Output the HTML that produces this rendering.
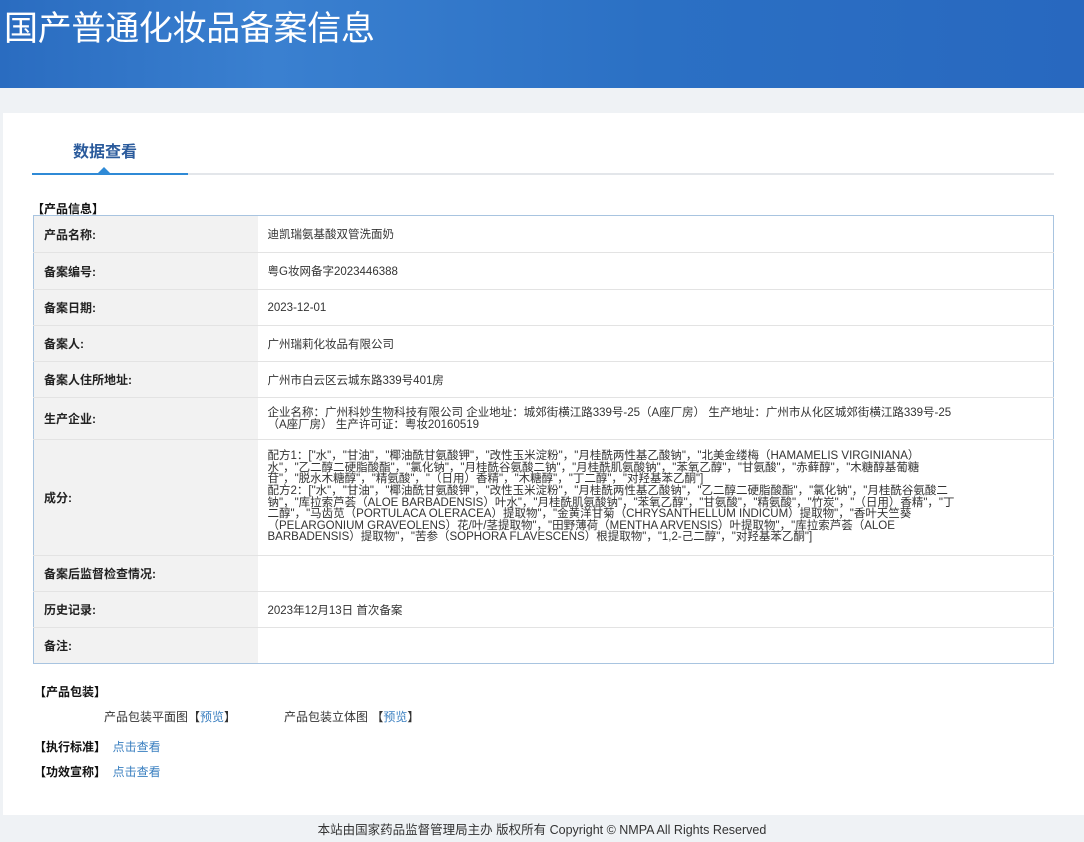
<!DOCTYPE html>
<html><head><meta charset="utf-8"><style>
*{margin:0;padding:0;box-sizing:border-box}
body{width:1084px;height:842px;background:#eff2f5;font-family:"Liberation Sans","Noto Sans CJK SC",sans-serif;font-size:12px;color:#333;position:relative;overflow:hidden}
.hd{position:absolute;left:0;top:0;width:1084px;height:88px;background:linear-gradient(90deg,#2a6cc0 0%,#3a80d0 25%,#2b70c4 60%,#2868bf 100%)}
.hd h1{position:absolute;left:4px;top:1px;font-size:34px;font-weight:normal;color:#fff;letter-spacing:-0.3px;font-family:"Liberation Sans","Noto Sans CJK SC",sans-serif}
.panel{position:absolute;left:3px;top:113px;width:1081px;height:702px;background:#fff}
.tab{position:absolute;left:73px;top:138px;font-size:16px;font-weight:bold;color:#2b5b9c}
.line{position:absolute;left:32px;top:173px;width:1022px;height:2px;background:#e3e6ea}
.line b{position:absolute;left:0;top:0;width:156px;height:2px;background:#2f8ad6}
.tri{position:absolute;left:98px;top:167px;width:0;height:0;border-left:6px solid transparent;border-right:6px solid transparent;border-bottom:6px solid #2f8ad6}
.sec{position:absolute;left:34px;font-weight:bold;color:#111;font-size:12px}
table{position:absolute;left:33px;top:215px;width:1021px;border-collapse:collapse;border:1px solid #a8c4e0}
td{border-top:1px solid #e3e3e3;vertical-align:middle}
td.l{width:224px;background:#f2f2f2;font-weight:bold;color:#222;padding-left:10px}
td.v{padding-left:10px;color:#333;font-size:11.5px}
.ing{line-height:11.6px;white-space:nowrap}
.a{color:#3a7fc0}
.ft{position:absolute;left:0;top:819px;width:1084px;text-align:center;font-size:12.5px;color:#333}
</style></head><body>
<div class="hd"><h1>国产普通化妆品备案信息</h1></div>
<div class="panel"></div>
<div class="tab">数据查看</div>
<div class="line"><b></b></div>
<div class="tri"></div>
<div class="sec" style="top:200px;left:32px">【产品信息】</div>
<table>
<tr style="height:37px"><td class="l" style="border-top:none">产品名称:</td><td class="v" style="border-top:none">迪凯瑞氨基酸双管洗面奶</td></tr>
<tr style="height:37px"><td class="l">备案编号:</td><td class="v">粤G妆网备字2023446388</td></tr>
<tr style="height:36px"><td class="l">备案日期:</td><td class="v">2023-12-01</td></tr>
<tr style="height:36px"><td class="l">备案人:</td><td class="v">广州瑞莉化妆品有限公司</td></tr>
<tr style="height:36px"><td class="l">备案人住所地址:</td><td class="v">广州市白云区云城东路339号401房</td></tr>
<tr style="height:42px"><td class="l">生产企业:</td><td class="v" style="line-height:12px;white-space:nowrap">企业名称：广州科妙生物科技有限公司 企业地址：城郊街横江路339号-25（A座厂房） 生产地址：广州市从化区城郊街横江路339号-25<br>（A座厂房） 生产许可证：粤妆20160519</td></tr>
<tr style="height:116px"><td class="l">成分:</td><td class="v ing">配方1：["水"，"甘油"，"椰油酰甘氨酸钾"，"改性玉米淀粉"，"月桂酰两性基乙酸钠"，"北美金缕梅（HAMAMELIS VIRGINIANA）<br>水"，"乙二醇二硬脂酸酯"，"氯化钠"，"月桂酰谷氨酸二钠"，"月桂酰肌氨酸钠"，"苯氧乙醇"，"甘氨酸"，"赤藓醇"，"木糖醇基葡糖<br>苷"，"脱水木糖醇"，"精氨酸"，"（日用）香精"，"木糖醇"，"丁二醇"，"对羟基苯乙酮"]<br>配方2：["水"，"甘油"，"椰油酰甘氨酸钾"，"改性玉米淀粉"，"月桂酰两性基乙酸钠"，"乙二醇二硬脂酸酯"，"氯化钠"，"月桂酰谷氨酸二<br>钠"，"库拉索芦荟（ALOE BARBADENSIS）叶水"，"月桂酰肌氨酸钠"，"苯氧乙醇"，"甘氨酸"，"精氨酸"，"竹炭"，"（日用）香精"，"丁<br>二醇"，"马齿苋（PORTULACA OLERACEA）提取物"，"金黄洋甘菊（CHRYSANTHELLUM INDICUM）提取物"，"香叶天竺葵<br>（PELARGONIUM GRAVEOLENS）花/叶/茎提取物"，"田野薄荷（MENTHA ARVENSIS）叶提取物"，"库拉索芦荟（ALOE<br>BARBADENSIS）提取物"，"苦参（SOPHORA FLAVESCENS）根提取物"，"1,2-己二醇"，"对羟基苯乙酮"]</td></tr>
<tr style="height:36px"><td class="l">备案后监督检查情况:</td><td class="v"></td></tr>
<tr style="height:36px"><td class="l">历史记录:</td><td class="v">2023年12月13日 首次备案</td></tr>
<tr style="height:36px"><td class="l">备注:</td><td class="v"></td></tr>
</table>
<div class="sec" style="top:683px">【产品包装】</div>
<div style="position:absolute;left:104px;top:708px">产品包装平面图【<span class="a">预览</span>】</div>
<div style="position:absolute;left:284px;top:708px">产品包装立体图 【<span class="a">预览</span>】</div>
<div class="sec" style="top:738px">【执行标准】 <span class="a" style="font-weight:normal">&nbsp;点击查看</span></div>
<div class="sec" style="top:763px">【功效宣称】 <span class="a" style="font-weight:normal">&nbsp;点击查看</span></div>
<div class="ft">本站由国家药品监督管理局主办 版权所有 Copyright © NMPA All Rights Reserved</div>
</body></html>
